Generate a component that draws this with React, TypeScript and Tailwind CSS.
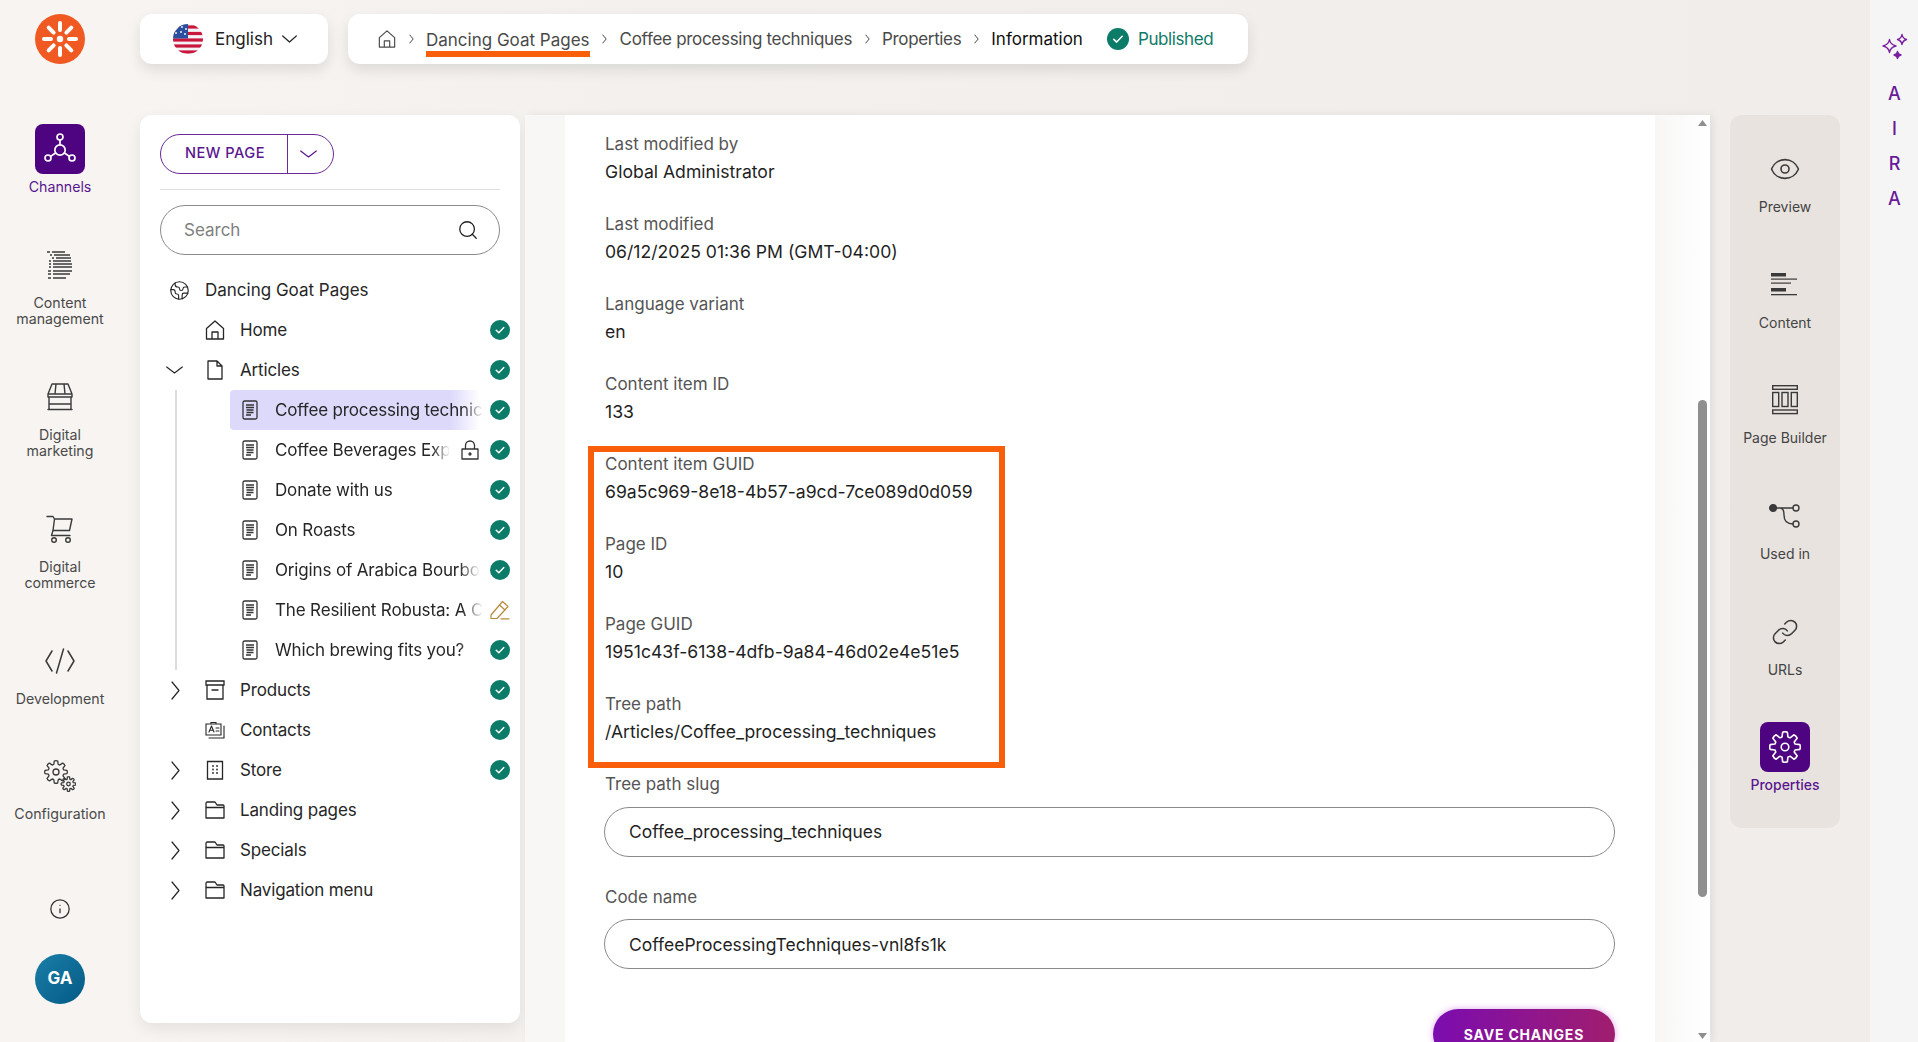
import React from "react";
import { Search, Info, Eye, Link as LinkIcon, Earth } from "lucide-react";

function gear(cx: number, cy: number, ro: number, ri: number, n: number) {
  const step = (Math.PI * 2) / n;
  let d = "";
  for (let i = 0; i < n; i++) {
    const a = i * step;
    const p = (r: number, t: number) =>
      `${(cx + r * Math.cos(t)).toFixed(2)} ${(cy + r * Math.sin(t)).toFixed(2)}`;
    d += `${i === 0 ? "M" : "L"}${p(ri, a - step * 0.36)} L${p(ro, a - step * 0.2)} Q${p(ro + 0.8, a)} ${p(ro, a + step * 0.2)} L${p(ri, a + step * 0.36)} Q${p(ri - 0.3, a + step / 2)} ${p(ri, a + step * 0.64)} `;
  }
  return d + "Z";
}

const S = { fill: "none", stroke: "currentColor", strokeLinecap: "round", strokeLinejoin: "round" } as const;

function ChevDown({ w = 15 }: { w?: number }) {
  return (
    <svg width={w} height="8" viewBox={`0 0 ${w} 8`} {...S} strokeWidth="1.2" className="shrink-0">
      <path d={`M0.700 1 ${w / 2} 7 ${w - 0.7} 1`} />
    </svg>
  );
}

function ChevRight() {
  return (
    <svg width="9" height="19" viewBox="0 0 9 19" {...S} strokeWidth="1.2" className="shrink-0">
      <path d="M1 1 8 9.500 1 18" />
    </svg>
  );
}

function Sep() {
  return (
    <span className="w-[30px] flex justify-center">
      <svg width="5" height="10" viewBox="0 0 5 10" {...S} strokeWidth="1">
        <path d="M0.800 1 4.200 5 0.800 9" />
      </svg>
    </span>
  );
}

function Logo() {
  const spokes = [0, 45, 90, 135, 180, 225, 270, 315];
  return (
    <svg width="50" height="50" viewBox="0 0 50 50">
      <circle cx="25" cy="25" r="25" fill="#f05a22" />
      {spokes.map((a) => (
        <line key={a} x1="25" y1="16" x2="25" y2="9" stroke="#fff" strokeWidth="4" strokeLinecap="round" transform={`rotate(${a} 25 25)`} />
      ))}
      <circle cx="25" cy="25" r="3.2" fill="#fff" />
    </svg>
  );
}

function Flag() {
  return (
    <svg width="30" height="30" viewBox="0 0 30 30">
      <defs>
        <clipPath id="fc"><circle cx="15" cy="15" r="15" /></clipPath>
      </defs>
      <g clipPath="url(#fc)">
        <rect width="30" height="30" fill="#f3f3f6" />
        {[3, 9.5, 16, 22, 28].map((y) => (
          <rect key={y} x="0" y={y - 1.6} width="30" height="3.2" fill="#c8173a" />
        ))}
        <rect width="15" height="14.5" fill="#2a4f9e" />
        {[[4, 4], [9, 3], [13, 5], [3, 9], [8, 8], [12, 10]].map(([x, y], i) => (
          <circle key={i} cx={x} cy={y} r="0.9" fill="#fff" />
        ))}
      </g>
    </svg>
  );
}

function ChannelsIcon() {
  return (
    <svg width="32" height="32" viewBox="0 0 32 32" {...S} stroke="#fff" strokeWidth="1.7">
      <circle cx="16" cy="4" r="3" />
      <circle cx="16" cy="17" r="5.2" />
      <circle cx="4" cy="25" r="3" />
      <circle cx="28" cy="25" r="3" />
      <path d="M16 7v4.800M11.500 20 6.600 23.400M20.500 20l4.900 3.400" />
    </svg>
  );
}

function ContentMgmtIcon() {
  return (
    <svg width="28" height="30" viewBox="0 0 28 30" {...S} strokeWidth="1.5" strokeLinecap="butt">
      <path d="M1 2h3M6 2h13M4 5h2M8 5h16M6 8h2M10 8h15M3 11h2M7 11h18M3 14h2M7 14h19M3 17h2M7 17h19M2 21h3M7 21h19M2 24h3M7 24h17M2 28h3M7 28h13" />
    </svg>
  );
}

function StoreIcon() {
  return (
    <svg width="28" height="28" viewBox="0 0 28 28" {...S} strokeWidth="1.4">
      <path d="M6 1h16l4 10H2L6 1ZM10 1 9 11M18 1l1 10M2 11v3M26 11v3M3 14v12M25 14v12M2 14h24M2 26.500h24M3 21h22" />
    </svg>
  );
}

function CartIcon() {
  return (
    <svg width="28" height="28" viewBox="0 0 28 28" {...S} strokeWidth="1.4">
      <path d="M1 1.500h6l1.500 2.500L7 15.500 5.500 20.500H24M8.500 4H26l-2.500 11.500H7" />
      <circle cx="8" cy="25" r="2.300" />
      <circle cx="22" cy="25" r="2.300" />
    </svg>
  );
}

function CodeIcon() {
  return (
    <svg width="30" height="26" viewBox="0 0 30 26" {...S} strokeWidth="1.5">
      <path d="M7 3 1 13l6 10M23 3l6 10-6 10M18.500 1l-7 24" />
    </svg>
  );
}

function GearsIcon() {
  return (
    <svg width="32" height="32" viewBox="0 0 32 32" {...S} strokeWidth="1.3">
      <path d={gear(12, 12, 11, 8, 8)} />
      <circle cx="12" cy="12" r="3" />
      <path d={gear(24.500, 24, 7, 5, 8)} />
      <circle cx="24.500" cy="24" r="1.800" />
    </svg>
  );
}

function HomeIcon({ size = 20 }: { size?: number }) {
  return (
    <svg width={size} height={size} viewBox="0 0 20 20" {...S} strokeWidth="1.3">
      <path d="M10 1 1.500 8.500V19h17V8.500L10 1ZM7 19v-7h6v7" />
    </svg>
  );
}

function PageIcon() {
  return (
    <svg width="18" height="20" viewBox="0 0 18 20" {...S} strokeWidth="1.3">
      <path d="M2 1h9l5 5v13H2V1ZM11 1v5h5" />
    </svg>
  );
}

function DocIcon() {
  return (
    <svg width="16" height="20" viewBox="0 0 16 20" {...S} strokeWidth="1.3" strokeLinecap="butt">
      <rect x="1" y="1" width="14" height="18" rx="1.500" />
      <path d="M4 5h8M4 7.500h8M4.500 10h7M4.500 12.500h7M4 15h5" />
    </svg>
  );
}

function BoxIcon() {
  return (
    <svg width="20" height="20" viewBox="0 0 20 20" {...S} strokeWidth="1.3">
      <path d="M1 1h18v4H1V1ZM2 5v14h16V5M7 10h6" strokeLinejoin="miter" />
    </svg>
  );
}

function ContactsIcon() {
  return (
    <svg width="20" height="20" viewBox="0 0 20 20" {...S} strokeWidth="1.1">
      <path d="M1 4h15v11H1V4ZM6 4V2.500h5V4M19 6v12H4" strokeLinejoin="miter" />
      <path d="M4 12l2.500-6L9 12M5 10.200h3M11 8h3M11 11h3" />
    </svg>
  );
}

function BuildingIcon() {
  return (
    <svg width="20" height="20" viewBox="0 0 20 20" {...S} strokeWidth="1.3">
      <path d="M2.500 1.500h15V19h-15V1.500Z" strokeLinejoin="miter" />
      <path d="M8 6h.01M12 6h.01M8 9.500h.01M12 9.500h.01M8 13h.01M12 13h.01" strokeWidth="1.800" />
    </svg>
  );
}

function FolderIcon() {
  return (
    <svg width="20" height="20" viewBox="0 0 20 20" {...S} strokeWidth="1.3">
      <path d="M1 18V3.500C1 2.700 1.500 2 2.300 2H10l2 3h6c.6 0 1 .5 1 1v12H1ZM1 7.500h18" />
    </svg>
  );
}

function Check({ size = 20 }: { size?: number }) {
  return (
    <svg width={size} height={size} viewBox="0 0 20 20" className="shrink-0">
      <circle cx="10" cy="10" r="10" fill="#0c7c69" />
      <path d="M6.200 10.300 8.800 12.800 13.800 7.500" fill="none" stroke="#fff" strokeWidth="1.400" strokeLinecap="round" strokeLinejoin="round" />
    </svg>
  );
}

function LockIcon() {
  return (
    <svg width="18" height="20" viewBox="0 0 18 20" {...S} strokeWidth="1.3" className="text-[#333] shrink-0">
      <path d="M1 9h16v10H1V9ZM4.500 9V5.500a4.500 4.500 0 0 1 9 0V9" />
      <circle cx="9" cy="14" r="1" />
    </svg>
  );
}

function PencilIcon() {
  return (
    <svg width="20" height="20" viewBox="0 0 20 20" {...S} strokeWidth="1.2" className="text-[#b58a3c] shrink-0">
      <path d="M1 15 12.500 1.500 18 6.500 7 18.500H1V15ZM9.500 5l5.500 5M11 18.800h8" />
    </svg>
  );
}

function ContentIcon() {
  return (
    <svg width="28" height="24" viewBox="0 0 28 24" fill="currentColor">
      <rect x="0" y="0" width="15" height="3.500" />
      <rect x="0" y="5.500" width="26" height="1.200" />
      <rect x="0" y="9.500" width="20" height="1.200" />
      <rect x="0" y="15" width="15" height="3.500" />
      <rect x="0" y="21" width="26" height="1.300" />
    </svg>
  );
}

function BuilderIcon() {
  return (
    <svg width="26" height="30" viewBox="0 0 26 30" {...S} strokeWidth="1.4" strokeLinejoin="miter">
      <rect x="0.700" y="0.700" width="24.600" height="3.600" />
      <rect x="0.700" y="7.500" width="6" height="14" />
      <rect x="10" y="7.500" width="6" height="14" />
      <rect x="19.300" y="7.500" width="6" height="14" />
      <rect x="0.700" y="25" width="24.600" height="3.600" />
    </svg>
  );
}

function UsedInIcon() {
  return (
    <svg width="32" height="24" viewBox="0 0 32 24" {...S} strokeWidth="1.4">
      <circle cx="4" cy="4" r="3.300" fill="currentColor" />
      <circle cx="27" cy="4" r="3" />
      <circle cx="27" cy="20" r="3" />
      <path d="M7 4h17M11 4c4 0 4 4 4 7 0 6 3 9 9 9" />
    </svg>
  );
}

function PropsGear() {
  return (
    <svg width="32" height="32" viewBox="0 0 32 32" {...S} stroke="#fff" strokeWidth="1.6">
      <path d={gear(16, 16, 15, 10.500, 8)} />
      <circle cx="16" cy="16" r="3.800" />
    </svg>
  );
}

function Sparkles() {
  return (
    <svg width="26" height="27" viewBox="0 0 26 27" {...S} strokeWidth="1.4" className="text-[#7a1fa2]">
      <path d="M7.500 6.500c.6 3.800 2 5.400 6.500 6.500-4.500 1.100-5.900 2.700-6.500 6.500C6.900 15.700 5.500 14.100 1 13c4.500-1.100 5.900-2.700 6.500-6.500Z" />
      <path d="M20 1.500c.4 2.900 1.500 4.100 4.500 5-3 .9-4.100 2.100-4.500 5-.4-2.900-1.500-4.100-4.500-5 3-.9 4.100-2.100 4.500-5Z" />
      <path d="M15.500 18.500c.3 2 1.100 2.900 3.500 3.500-2.400.6-3.200 1.500-3.500 3.500-.3-2-1.100-2.900-3.500-3.500 2.400-.6 3.200-1.500 3.500-3.500Z" fill="currentColor" />
    </svg>
  );
}

function NavItem({ icon, label, active }: { icon: React.ReactNode; label: string[]; active?: boolean }) {
  return (
    <div className="flex flex-col items-center">
      <div className={active ? "w-[50px] h-[50px] flex items-center justify-center rounded-lg bg-[#4e0480]" : "w-[50px] h-[50px] flex items-center justify-center text-[#3a3a3a]"}>
        {icon}
      </div>
      <div className={active ? "pt-[5px] text-[14.2px] leading-[16.5px] text-center whitespace-nowrap text-[#5a1790]" : "pt-[5px] text-[14.2px] leading-[16.5px] text-center whitespace-nowrap text-[#4a4a4a]"}>
        {label.map((l) => (
          <div key={l}>{l}</div>
        ))}
      </div>
    </div>
  );
}

function SideItem({ icon, label, active }: { icon: React.ReactNode; label: string; active?: boolean }) {
  return (
    <div className="flex flex-col items-center">
      <div className={active ? "w-[50px] h-[50px] flex items-center justify-center rounded-lg bg-[#4e0480]" : "w-[50px] h-[50px] flex items-center justify-center text-[#3a3a3a]"}>
        {icon}
      </div>
      <div className={active ? "pt-[3px] text-[14px] leading-[20px] font-medium text-[#5a1790]" : "pt-[3px] text-[14px] leading-[20px] text-[#444]"}>{label}</div>
    </div>
  );
}

function TreeTop({ icon, label, chevron, status = true }: { icon: React.ReactNode; label: string; chevron?: "down" | "right"; status?: boolean }) {
  return (
    <div className="flex items-center h-10 text-[#262626]">
      <div className="w-[45px] shrink-0 flex items-center">
        {chevron === "down" && <div className="pl-[6px] flex"><ChevDown w={17} /></div>}
        {chevron === "right" && <div className="pl-[11px] flex"><ChevRight /></div>}
      </div>
      <div className="w-5 flex justify-center shrink-0">{icon}</div>
      <div className="ml-[15px] flex-1 pt-[2px] tracking-[-0.15px]">{label}</div>
      {status && <Check />}
    </div>
  );
}

function TreeLeaf({ label, selected, lock, draft }: { label: string; selected?: boolean; lock?: boolean; draft?: boolean }) {
  return (
    <div className="flex items-center h-10 text-[#262626]">
      <div
        className={
          selected
            ? "h-10 flex items-center pl-[12px] flex-1 min-w-0 rounded bg-[linear-gradient(to_right,#dcd9fb_88%,transparent)]"
            : "h-10 flex items-center pl-[12px] flex-1 min-w-0"
        }
      >
        <div className="text-[#333] shrink-0 flex"><DocIcon /></div>
        <div className="ml-[17px] pt-[2px] tracking-[-0.15px] whitespace-nowrap flex-1 [mask-image:linear-gradient(to_right,black_90%,transparent)]">{label}</div>
      </div>
      {lock && <div className="ml-[12px] mr-[11px]"><LockIcon /></div>}
      <div className={lock ? "" : "ml-[10px]"}>{draft ? <PencilIcon /> : <Check />}</div>
    </div>
  );
}

function Field({ label, value }: { label: string; value: string }) {
  return (
    <div className="leading-[28px] ml-[1px]">
      <div className="text-[#555]">{label}</div>
      <div className="text-[#1f1f1f] text-[17.6px]">{value}</div>
    </div>
  );
}

export default function App() {
  const fields = [
    ["Last modified by", "Global Administrator"],
    ["Last modified", "06/12/2025 01:36 PM (GMT-04:00)"],
    ["Language variant", "en"],
    ["Content item ID", "133"],
    ["Content item GUID", "69a5c969-8e18-4b57-a9cd-7ce089d0d059"],
    ["Page ID", "10"],
    ["Page GUID", "1951c43f-6138-4dfb-9a84-46d02e4e51e5"],
    ["Tree path", "/Articles/Coffee_processing_techniques"],
  ];
  return (
    <div className="w-[1918px] h-[1042px] flex overflow-hidden bg-[#f7f4f1] font-['Inter',sans-serif] text-[17px]">
      {/* left navigation */}
      <div className="w-[120px] shrink-0 h-full flex flex-col items-center pt-[14px] pb-[38px]">
        <Logo />
        <div className="mt-[60px] flex flex-col gap-[44px] items-center">
          <NavItem active icon={<ChannelsIcon />} label={["Channels"]} />
          <NavItem icon={<ContentMgmtIcon />} label={["Content", "management"]} />
          <NavItem icon={<StoreIcon />} label={["Digital", "marketing"]} />
          <NavItem icon={<CartIcon />} label={["Digital", "commerce"]} />
          <NavItem icon={<CodeIcon />} label={["Development"]} />
          <NavItem icon={<GearsIcon />} label={["Configuration"]} />
        </div>
        <div className="mt-auto flex flex-col items-center text-[#333]">
          <Info size={22} strokeWidth={1.4} />
          <div className="mt-[34px] w-[50px] h-[50px] rounded-full bg-[linear-gradient(135deg,#1a7ea6,#045a86)] flex items-center justify-center text-white font-bold text-[17px]">GA</div>
        </div>
      </div>

      {/* centre */}
      <div className="w-[1750px] shrink-0 h-full pl-[20px] pt-[14px] bg-[linear-gradient(to_right,#f7f4f1,#f3f0ed_30%,#f0edea)]">
        <div className="flex gap-5 h-[50px]">
          <div className="w-[188px] h-[50px] bg-white rounded-xl shadow-[0_6px_14px_rgba(0,0,0,0.1)] flex items-center pl-[33px] text-[#222]">
            <Flag />
            <span className="ml-3 pt-[2px]">English</span>
            <span className="ml-[9px] flex"><ChevDown /></span>
          </div>
          <div className="w-[900px] h-[50px] bg-white rounded-xl shadow-[0_6px_14px_rgba(0,0,0,0.1)] flex items-center pl-[30px] text-[#4a4a4a]">
            <HomeIcon size={18} />
            <Sep />
            <span className="relative leading-[24px] pt-[2px]">
              Dancing Goat Pages
              <span className="absolute left-0 right-0 top-[25px] h-[6px] bg-[#f95f0a]" />
            </span>
            <Sep />
            <span className="pt-[2px] tracking-[-0.3px]">Coffee processing techniques</span>
            <Sep />
            <span className="pt-[2px] tracking-[-0.35px]">Properties</span>
            <Sep />
            <span className="pt-[2px] text-[#111]">Information</span>
            <span className="ml-[24px]"><Check size={22} /></span>
            <span className="ml-[9px] pt-[2px] tracking-[-0.4px] text-[#0f7a68]">Published</span>
          </div>
        </div>

        <div className="mt-[51px] flex items-start">
          {/* tree */}
          <div className="w-[380px] h-[908px] shrink-0 bg-white rounded-xl shadow-[0_6px_16px_rgba(0,0,0,0.08)] pt-[19px] px-5">
            <div className="w-[174px] h-10 flex rounded-full border-[1.5px] border-[#6a2a98] text-[#5a1790]">
              <div className="w-[127px] pl-[2px] flex items-center justify-center text-[14.6px] font-medium tracking-[0.5px] border-r-[1.5px] border-[#6a2a98]">NEW PAGE</div>
              <div className="flex-1 flex items-center justify-center pr-[4px]"><ChevDown w={17} /></div>
            </div>
            <div className="mt-[15px] h-px w-[340px] bg-[#e2e0de]" />
            <div className="mt-[15px] h-[50px] w-[340px] rounded-full border border-[#8a8a8a] flex items-center pl-[23px] pr-[20px] justify-between">
              <span className="text-[#808080] pt-[2px]">Search</span>
              <Search size={22} strokeWidth={1.4} className="text-[#222]" />
            </div>
            <div className="mt-[15px] w-[350px]">
              <div className="flex items-center h-10 text-[#262626] pl-[9px]">
                <Earth size={21} strokeWidth={1.3} />
                <span className="ml-[15px] pt-[2px]">Dancing Goat Pages</span>
              </div>
              <TreeTop icon={<HomeIcon />} label="Home" />
              <TreeTop icon={<PageIcon />} label="Articles" chevron="down" />
              <div className="ml-[15px] pl-[53px] border-l-2 border-[#dcdcdc]">
                <TreeLeaf label="Coffee processing technic" selected />
                <TreeLeaf label="Coffee Beverages Exp" lock />
                <TreeLeaf label="Donate with us" />
                <TreeLeaf label="On Roasts" />
                <TreeLeaf label="Origins of Arabica Bourbo" />
                <TreeLeaf label="The Resilient Robusta: A C" draft />
                <TreeLeaf label="Which brewing fits you?" />
              </div>
              <TreeTop icon={<BoxIcon />} label="Products" chevron="right" />
              <TreeTop icon={<ContactsIcon />} label="Contacts" />
              <TreeTop icon={<BuildingIcon />} label="Store" chevron="right" />
              <TreeTop icon={<FolderIcon />} label="Landing pages" chevron="right" status={false} />
              <TreeTop icon={<FolderIcon />} label="Specials" chevron="right" status={false} />
              <TreeTop icon={<FolderIcon />} label="Navigation menu" chevron="right" status={false} />
            </div>
          </div>

          {/* main */}
          <div className="relative ml-[5px] w-[1185px] h-[927px] shrink-0 flex bg-[#f8f7f6] overflow-hidden shadow-[3px_0_8px_rgba(0,0,0,0.07)]">
            <div className="ml-[40px] w-[1090px] h-full bg-white pl-[39px] pr-[40px] pt-[15px]">
              <div className="flex flex-col gap-[24px]">
                {fields.map(([l, v]) => (
                  <Field key={l} label={l} value={v} />
                ))}
              </div>
              <div className="mt-[24px] ml-[1px] leading-[28px] text-[#555]">Tree path slug</div>
              <div className="mt-[9px] h-[50px] rounded-full border border-[#8a8a8a] flex items-center pl-[24px] pt-[1px] text-[#1f1f1f] text-[17.4px]">Coffee_processing_techniques</div>
              <div className="mt-[26px] ml-[1px] leading-[28px] text-[#555]">Code name</div>
              <div className="mt-[8px] h-[50px] rounded-full border border-[#8a8a8a] flex items-center pl-[24px] pt-[2px] text-[#1f1f1f] text-[17.5px]">CoffeeProcessingTechniques-vnl8fs1k</div>
              <div className="mt-[40px] flex justify-end">
                <div className="w-[182px] h-[50px] rounded-full bg-[linear-gradient(90deg,#7b0cb0,#a01e6e)] shadow-[0_0_6px_rgba(190,80,220,0.5)] flex items-center justify-center text-white font-bold text-[14px] tracking-[0.8px]">SAVE CHANGES</div>
              </div>
            </div>
            <div className="flex-1 h-full bg-[linear-gradient(to_right,#f8f7f6,#ffffff)] pl-[43px] flex flex-col">
              <svg width="9" height="8" viewBox="0 0 9 8" className="mt-[4px] shrink-0"><path d="M4.500 1 9 7H0Z" fill="#8f8f8f" /></svg>
              <div className="mt-[273px] w-[9px] h-[497px] rounded-full bg-[#8f8f8f] shrink-0" />
              <svg width="9" height="8" viewBox="0 0 9 8" className="mt-[135px] shrink-0"><path d="M4.500 7 9 1H0Z" fill="#8f8f8f" /></svg>
            </div>
            <div className="absolute left-[63px] top-[331px] w-[417px] h-[322px] border-[6px] border-[#f95f0a]" />
          </div>

          {/* right rail */}
          <div className="ml-[20px] w-[110px] shrink-0 h-[713px] rounded-xl bg-[#e8e3df] pt-[29px] flex flex-col items-center gap-[42.700px]">
            <SideItem icon={<Eye size={32} strokeWidth={1.2} />} label="Preview" />
            <SideItem icon={<ContentIcon />} label="Content" />
            <SideItem icon={<BuilderIcon />} label="Page Builder" />
            <SideItem icon={<UsedInIcon />} label="Used in" />
            <SideItem icon={<LinkIcon size={28} strokeWidth={1.3} />} label="URLs" />
            <SideItem active icon={<PropsGear />} label="Properties" />
          </div>
        </div>
      </div>

      {/* AIRA */}
      <div className="w-[48px] shrink-0 h-full bg-[#f5f5f5] flex flex-col items-center pt-[33px] pl-[1px] text-[#6a1b9a] text-[18px] font-medium">
        <Sparkles />
        <div className="mt-[22px] flex flex-col items-center gap-[11px] leading-[24px]">
          <span>A</span>
          <span>I</span>
          <span>R</span>
          <span>A</span>
        </div>
      </div>
    </div>
  );
}
